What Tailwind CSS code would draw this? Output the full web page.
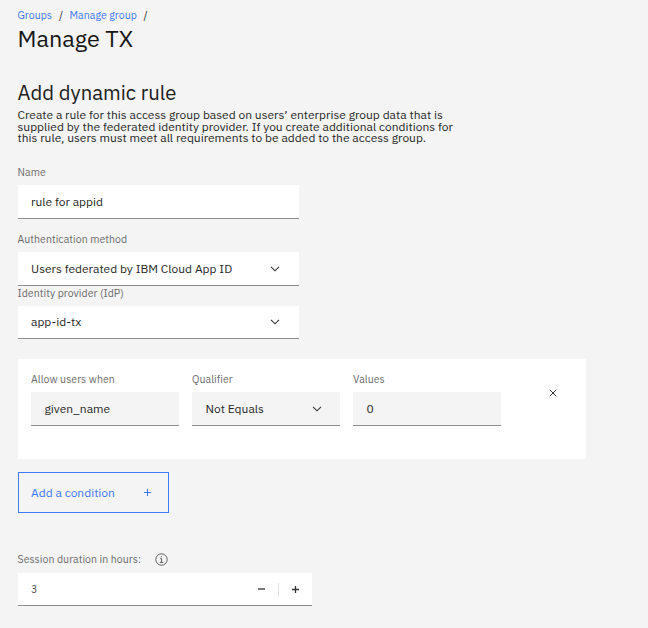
<!DOCTYPE html>
<html lang="en">
<head>
<meta charset="utf-8">
<title>Manage TX</title>
<script src="https://cdn.jsdelivr.net/npm/@tailwindcss/browser@4"></script>
</head>
<body class="bg-[#f4f4f4] w-[648px] h-[628px] overflow-hidden font-['IBM_Plex_Sans','Roboto',sans-serif] text-[#262626] text-[12px] tracking-normal whitespace-nowrap">
<main class="flex flex-col items-start pl-[17.5px] pt-[8px]">
  <nav class="flex h-[14px] items-center text-[10.5px] leading-[14px] tracking-[0.05px]">
    <a class="w-[41.5px] text-[#3b76f6]">Groups</a>
    <span class="w-[10.5px]">/</span>
    <a class="w-[74px] text-[#3b76f6]">Manage group</a>
    <span>/</span>
  </nav>
  <h1 class="mt-[2px] h-[28px] text-[23.4px] leading-[28px] tracking-normal text-[#161616]">Manage TX</h1>
  <h2 class="mt-[27.5px] h-[26px] text-[20.3px] leading-[26px] tracking-normal text-[#202020]">Add dynamic rule</h2>
  <p class="mt-[3.5px] leading-[11.7px]">Create a rule for this access group based on users’ enterprise group data that is<br>supplied by the federated identity provider. If you create additional conditions for<br>this rule, users must meet all requirements to be added to the access group.</p>

  <label class="mt-[21px] h-[14px] text-[10.5px] leading-[14px] tracking-[0.06px] text-[#6b6b6b]">Name</label>
  <div class="mt-[6px] flex h-[34px] w-[281px] items-center border-b border-[#8d8d8d] bg-white px-[13.5px]">rule for appid</div>

  <label class="mt-[13px] h-[14px] text-[10.5px] leading-[14px] tracking-[0.06px] text-[#6b6b6b]">Authentication method</label>
  <div class="mt-[6px] flex h-[34px] w-[281px] items-center justify-between border-b border-[#8d8d8d] bg-white pl-[13.5px] pr-[18.5px]">
    <span>Users federated by IBM Cloud App ID</span>
    <svg class="h-[6px] w-[10px]" viewBox="0 0 10 6" fill="none" stroke="#333" stroke-width="1.1"><path d="M1 .8 5 4.8 9 .8"/></svg>
  </div>

  <label class="h-[14px] text-[10.5px] leading-[14px] tracking-[0.06px] text-[#6b6b6b]">Identity provider (IdP)</label>
  <div class="mt-[6px] flex h-[33px] w-[281px] items-center justify-between border-b border-[#8d8d8d] bg-white pl-[13.5px] pr-[18.5px]">
    <span>app-id-tx</span>
    <svg class="h-[6px] w-[10px]" viewBox="0 0 10 6" fill="none" stroke="#333" stroke-width="1.1"><path d="M1 .8 5 4.8 9 .8"/></svg>
  </div>

  <section class="mt-[20px] flex h-[100px] w-[568px] gap-[13px] bg-white pl-[13.5px] pt-[13px]">
    <div class="w-[148px]">
      <div class="h-[14px] text-[10.5px] leading-[14px] tracking-[0.06px] text-[#6b6b6b]">Allow users when</div>
      <div class="mt-[6px] flex h-[34px] items-center border-b border-[#8d8d8d] bg-[#f4f4f4] px-[13.5px]">given_name</div>
    </div>
    <div class="w-[148px]">
      <div class="h-[14px] text-[10.5px] leading-[14px] tracking-[0.06px] text-[#6b6b6b]">Qualifier</div>
      <div class="mt-[6px] flex h-[34px] items-center justify-between border-b border-[#8d8d8d] bg-[#f4f4f4] pl-[13.5px] pr-[18.5px]">
        <span>Not Equals</span>
        <svg class="h-[6px] w-[10px]" viewBox="0 0 10 6" fill="none" stroke="#333" stroke-width="1.1"><path d="M1 .8 5 4.8 9 .8"/></svg>
      </div>
    </div>
    <div class="w-[148px]">
      <div class="h-[14px] text-[10.5px] leading-[14px] tracking-[0.06px] text-[#6b6b6b]">Values</div>
      <div class="mt-[6px] flex h-[34px] items-center border-b border-[#8d8d8d] bg-[#f4f4f4] px-[13.5px]">0</div>
    </div>
    <svg class="ml-[34.5px] mt-[16.5px] h-[8px] w-[8px]" viewBox="0 0 8 8" fill="none" stroke="#333" stroke-width="1"><path d="M.7.7 7.3 7.3M7.3.7.7 7.3"/></svg>
  </section>

  <button class="mt-[13px] flex h-[41px] w-[151px] items-center justify-between border border-[#3b7bf8] pl-[12.5px] pr-[17px] text-[#3b76f6]">
    <span>Add a condition</span>
    <svg class="h-[7px] w-[7px]" viewBox="0 0 7 7" fill="none" stroke="#3b76f6" stroke-width="1"><path d="M3.5 0V7M0 3.5H7"/></svg>
  </button>

  <div class="mt-[39px] flex h-[14px] items-center gap-[13.5px] text-[10.5px] leading-[14px] tracking-[0.06px] text-[#6b6b6b]">
    <span>Session duration in hours:</span>
    <svg class="h-[13px] w-[13px]" viewBox="0 0 13 13" fill="none" stroke="#4c4c4c" stroke-width="0.9"><circle cx="6.5" cy="6.5" r="5.7"/><path d="M5.2 5.6H6.6V9.3M4.9 9.4H8.2"/><circle cx="6.4" cy="3.6" r=".6" fill="#4c4c4c" stroke="none"/></svg>
  </div>
  <div class="mt-[7px] flex h-[33px] w-[294.5px] items-center border-b border-[#8d8d8d] bg-white pl-[13.5px] text-[10.5px] text-[#525252]">
    <span class="flex-1 pt-[2px]">3</span>
    <svg class="h-[8px] w-[7px]" viewBox="0 0 7 8" stroke="#333" stroke-width="1.3"><path d="M0 4H7"/></svg>
    <div class="ml-[13px] h-[13px] w-px bg-[#e0e0e0]"></div>
    <svg class="ml-[13px] mr-[13.5px] h-[7px] w-[7px]" viewBox="0 0 7 7" stroke="#333" stroke-width="1.3"><path d="M3.5 0V7M0 3.5H7"/></svg>
  </div>
</main>
</body>
</html>
